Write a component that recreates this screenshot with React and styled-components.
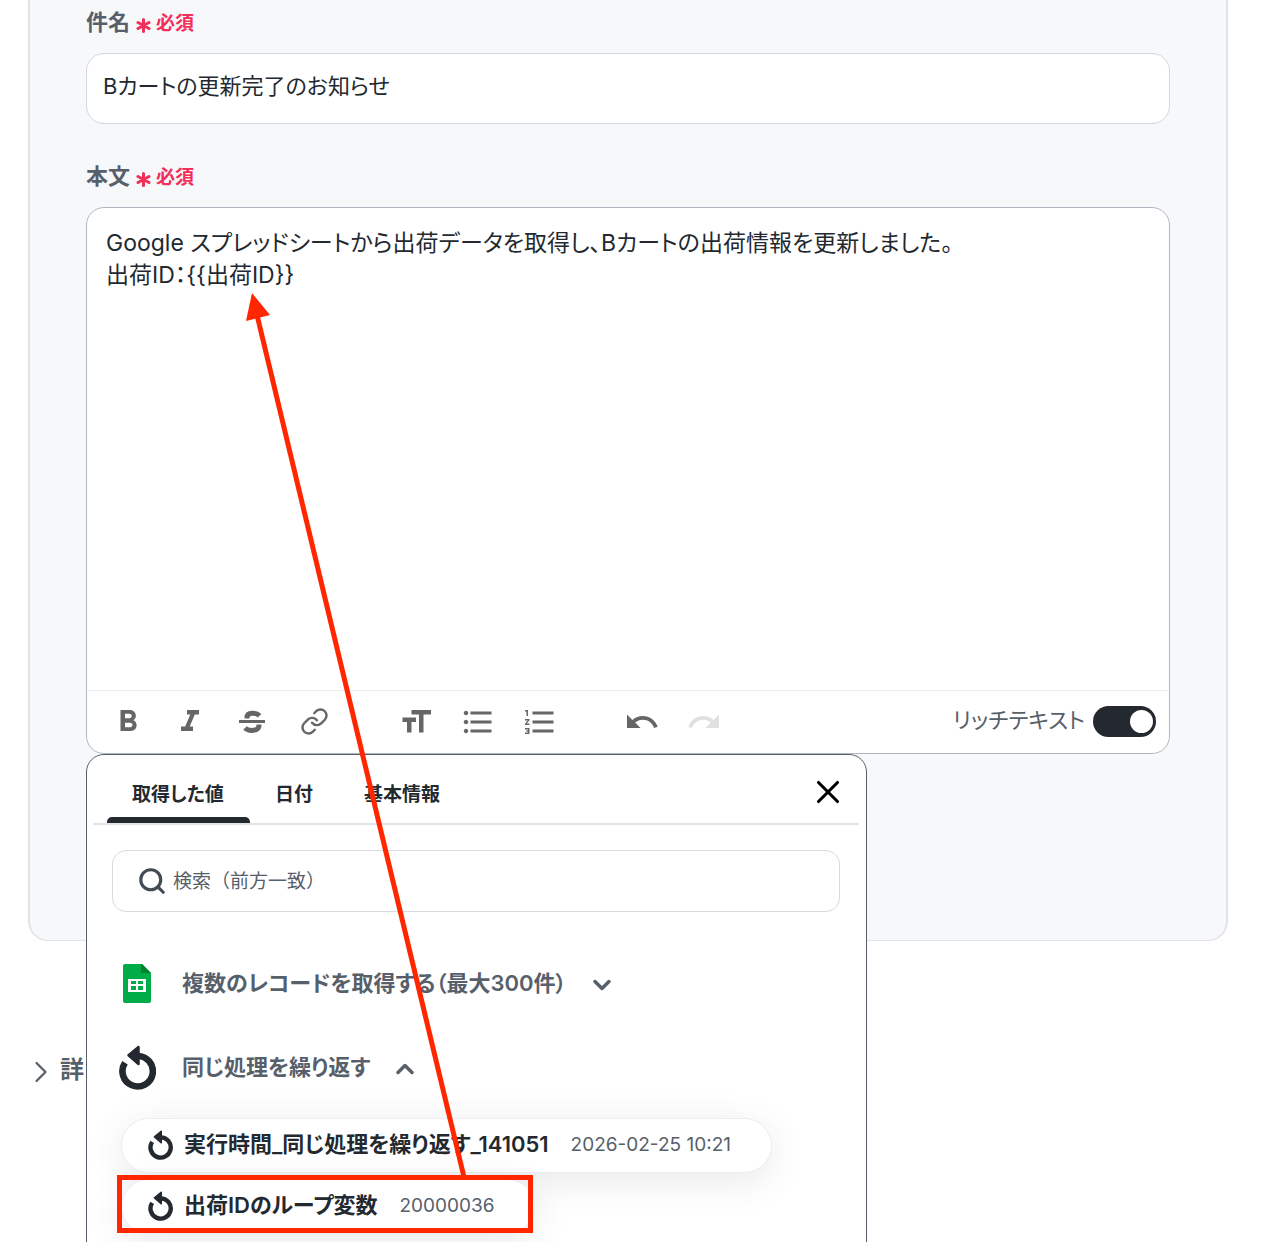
import React, { useState } from "react";
import styled, { createGlobalStyle } from "styled-components";
import {
  MdFormatBold,
  MdFormatItalic,
  MdFormatSize,
  MdFormatListBulleted,
  MdFormatListNumbered,
  MdUndo,
  MdRedo,
} from "react-icons/md";
import { Link, Search, X, ChevronDown, ChevronUp, ChevronRight } from "lucide-react";

const GlobalStyle = createGlobalStyle`
  * {
    box-sizing: border-box;
  }

  body {
    margin: 0;
    background: #fff;
    color: #23292f;
    font-family: Inter, "Noto Sans CJK JP", sans-serif;
    font-feature-settings: "palt";
  }

  button, input, textarea {
    font: inherit;
    font-feature-settings: inherit;
    color: inherit;
  }
`;

const Page = styled.main`
  position: relative;
  height: 100vh;
  overflow: hidden;
`;

const Card = styled.section`
  margin: 0 42px 0 28px;
  padding: 0 56px 186px;
  background: #f7f8fa;
  border: 2px solid #e0e4e9;
  border-top: 0;
  border-bottom-width: 1px;
  border-radius: 0 0 20px 20px;
`;

const Field = styled.div`
  position: relative;
  padding-top: ${(props) => props.$top}px;
`;

const Label = styled.label`
  display: flex;
  align-items: center;
  height: 32px;
  padding-bottom: 6px;
  font-size: 22px;
  font-weight: 600;
  color: #57606a;
`;

const Required = styled.span`
  display: flex;
  align-items: center;
  gap: 5px;
  margin-left: 6px;
  padding-top: 2px;
  font-size: 19px;
  color: #f12f5b;
`;

const SubjectInput = styled.input`
  display: block;
  width: 100%;
  height: 71px;
  margin-top: 14px;
  padding: 0 16px 10px;
  font-size: 22px;
  background: #fff;
  border: 1px solid #d0d7de;
  border-radius: 18px;
`;

const Editor = styled.div`
  margin-top: 14px;
  background: #fff;
  border: 1px solid #afb8c1;
  border-radius: 18px;
  overflow: hidden;
`;

const BodyInput = styled.textarea`
  display: block;
  width: 100%;
  height: 482px;
  padding: 19px;
  font-size: 23px;
  line-height: 32px;
  background: transparent;
  border: 0;
  outline: 0;
  resize: none;
`;

const Toolbar = styled.div`
  display: flex;
  align-items: center;
  gap: 66px;
  height: 63px;
  padding: 0 13px 1px 23px;
  border-top: 1px solid #ebecee;
`;

const ToolGroup = styled.div`
  display: flex;
  gap: 26px;
`;

const ToolButton = styled.button`
  display: flex;
  align-items: center;
  justify-content: center;
  width: 36px;
  height: 36px;
  padding: 0;
  color: #666;
  background: none;
  border: 0;

  &:disabled {
    color: #e0e0e0;
  }
`;

const SwitchLabel = styled.label`
  display: flex;
  align-items: center;
  gap: 8px;
  margin-left: auto;
  font-size: 22px;
  color: #57606a;
`;

const SwitchText = styled.span`
  padding-bottom: 8px;
`;

const Switch = styled.input`
  appearance: none;
  display: flex;
  justify-content: flex-end;
  align-items: center;
  width: 63px;
  height: 31px;
  margin: 0;
  padding: 3px;
  background: #23292f;
  border-radius: 16px;

  &::before {
    content: "";
    width: 23px;
    height: 23px;
    background: #fff;
    border-radius: 50%;
  }

  &:not(:checked) {
    justify-content: flex-start;
    background: #afb8c1;
  }
`;

const Popup = styled.div`
  position: absolute;
  top: 100%;
  left: 0;
  width: 781px;
  height: 600px;
  padding: 0 7px 0 6px;
  background: #fff;
  border: 1px solid #57606a;
  border-radius: 18px;
`;

const Tabs = styled.div`
  display: flex;
  align-items: flex-end;
  height: 70px;
  padding: 6px 12px 0 14px;
  border-bottom: 2px solid #e0e3e8;
`;

const Tab = styled.button`
  display: flex;
  flex-direction: column;
  justify-content: flex-end;
  gap: 11px;
  padding: 0;
  font-size: 19px;
  font-weight: 600;
  background: none;
  border: 0;

  &::after {
    content: "";
    width: 100%;
    height: 6px;
    background: ${(props) => (props.$active ? "#23292f" : "transparent")};
    border-radius: 5px 5px 0 0;
  }
`;

const TabText = styled.span`
  padding: 0 26px 0 25px;
`;

const CloseButton = styled.button`
  display: flex;
  align-self: center;
  margin-left: auto;
  padding: 0;
  color: #000;
  background: none;
  border: 0;
`;

const SearchBox = styled.label`
  display: flex;
  align-items: center;
  gap: 6px;
  height: 62px;
  margin: 25px 19px 0;
  padding: 0 24px;
  color: #424a53;
  border: 1px solid #d5dbe1;
  border-radius: 14px;
`;

const SearchInput = styled.input`
  flex: 1;
  padding: 0;
  font-size: 19px;
  font-feature-settings: normal;
  background: none;
  border: 0;
  outline: 0;

  &::placeholder {
    color: #57606a;
  }
`;

const Source = styled.button`
  display: flex;
  align-items: center;
  height: 44px;
  margin: ${(props) => props.$top}px 0 0 22px;
  padding: 0;
  font-size: 22px;
  font-weight: 600;
  color: #57606a;
  background: none;
  border: 0;
`;

const SourceIcon = styled.span`
  display: flex;
  justify-content: center;
  width: 44px;
  margin-right: 23px;
`;

const SourceName = styled.span`
  margin-right: 21px;
  padding-bottom: 4px;
`;

const SourceChevron = styled.span`
  display: flex;
  padding-top: 4px;
`;

const ValueList = styled.div`
  display: flex;
  flex-direction: column;
  align-items: flex-start;
  gap: 6px;
  margin: 29px 0 0 28px;
`;

const Value = styled.button`
  display: flex;
  align-items: center;
  height: 55px;
  padding: 0 40px 2px 26px;
  background: #fff;
  border: 1px solid #eaeef2;
  border-radius: 28px;
  box-shadow: 0 8px 36px rgba(66, 74, 83, 0.12);
`;

const ValueName = styled.span`
  margin: 0 22px 0 11px;
  padding-bottom: 6px;
  font-size: 22px;
  font-weight: 600;
`;

const ValueSample = styled.span`
  font-size: 19px;
  color: #57606a;
`;

const Details = styled.button`
  display: flex;
  align-items: center;
  gap: 1px;
  margin: 109px 0 0 23px;
  padding: 0;
  font-size: 24px;
  font-weight: 600;
  color: #57606a;
  background: none;
  border: 0;
`;

const DetailsText = styled.span`
  padding-bottom: 8px;
`;

const Annotation = styled.svg`
  position: absolute;
  top: 0;
  left: 0;
  pointer-events: none;
`;

const SheetsIcon = () => (
  <svg width="28" height="39" viewBox="0 0 28 39">
    <path d="M2 0h17l9 9v28a2 2 0 0 1-2 2H2a2 2 0 0 1-2-2V2a2 2 0 0 1 2-2z" fill="#00ac47" />
    <path d="M18 0h1l9 9h-10z" fill="#00832d" />
    <path
      d="M5 15h18v13H5zM8 17v3h5v-3zM15 17v3h5v-3zM8 22v4h5v-4zM15 22v4h5v-4z"
      fill="#fff"
      fillRule="evenodd"
    />
  </svg>
);

const LoopIcon = ({ size }) => (
  <svg width={size} height={Math.round((size * 45) / 37)} viewBox="0 0 37 45">
    <path
      d="M6 17.800A15.200 15.200 0 1 0 18.500 11"
      fill="none"
      stroke="#23292f"
      strokeWidth="6.600"
    />
    <path
      d="M9.500 10.200L19.500 2V19z"
      fill="#23292f"
      stroke="#23292f"
      strokeWidth="2.500"
      strokeLinejoin="round"
    />
  </svg>
);

const StrikeIcon = () => (
  <svg width="36" height="36" viewBox="0 0 36 36" fill="none" stroke="currentColor">
    <path d="M5 17.500h26" strokeWidth="3" />
    <path d="M25.500 11.800C22.500 8.500 13 8 13 13.500V14.500" strokeWidth="5" />
    <path d="M11 24C14.500 27.500 25 27.500 25 21.500V20.500" strokeWidth="5" />
  </svg>
);

const StarIcon = () => (
  <svg width="15" height="25" viewBox="0 0 15 25" stroke="currentColor" strokeWidth="3" strokeLinecap="round">
    <path d="M7.500 10.500v12M2 13.500l11 6M13 13.500l-11 6" />
  </svg>
);

const RequiredMark = () => (
  <Required>
    <StarIcon />
    必須
  </Required>
);

const tabs = ["取得した値", "日付", "基本情報"];

const values = [
  { name: "実行時間_同じ処理を繰り返す_141051", sample: "2026-02-25 10:21" },
  { name: "出荷IDのループ変数", sample: "20000036" },
];

const App = () => {
  const [subject, setSubject] = useState("Bカートの更新完了のお知らせ");
  const [body, setBody] = useState(
    "Google スプレッドシートから出荷データを取得し、Bカートの出荷情報を更新しました。\n出荷ID：{{出荷ID}}"
  );
  const [rich, setRich] = useState(true);
  const [activeTab, setActiveTab] = useState(tabs[0]);

  return (
    <Page>
      <GlobalStyle />
      <Card>
        <Field $top={7}>
          <Label htmlFor="subject">
            件名
            <RequiredMark />
          </Label>
          <SubjectInput id="subject" value={subject} onChange={(e) => setSubject(e.target.value)} />
        </Field>
        <Field $top={37}>
          <Label htmlFor="body">
            本文
            <RequiredMark />
          </Label>
          <Editor>
            <BodyInput id="body" value={body} onChange={(e) => setBody(e.target.value)} />
            <Toolbar>
              <ToolGroup>
                <ToolButton aria-label="bold"><MdFormatBold size={36} /></ToolButton>
                <ToolButton aria-label="italic"><MdFormatItalic size={36} /></ToolButton>
                <ToolButton aria-label="strike"><StrikeIcon /></ToolButton>
                <ToolButton aria-label="link"><Link size={29} /></ToolButton>
              </ToolGroup>
              <ToolGroup>
                <ToolButton aria-label="size"><MdFormatSize size={36} /></ToolButton>
                <ToolButton aria-label="bullets"><MdFormatListBulleted size={38} /></ToolButton>
                <ToolButton aria-label="numbers"><MdFormatListNumbered size={36} /></ToolButton>
              </ToolGroup>
              <ToolGroup>
                <ToolButton aria-label="undo"><MdUndo size={36} /></ToolButton>
                <ToolButton aria-label="redo" disabled><MdRedo size={36} /></ToolButton>
              </ToolGroup>
              <SwitchLabel>
                <SwitchText>リッチテキスト</SwitchText>
                <Switch type="checkbox" checked={rich} onChange={() => setRich(!rich)} />
              </SwitchLabel>
            </Toolbar>
          </Editor>
          <Popup>
            <Tabs>
              {tabs.map((tab) => (
                <Tab key={tab} $active={tab === activeTab} onClick={() => setActiveTab(tab)}>
                  <TabText>{tab}</TabText>
                </Tab>
              ))}
              <CloseButton aria-label="close"><X size={38} strokeWidth={2} /></CloseButton>
            </Tabs>
            <SearchBox>
              <Search size={30} strokeWidth={2.5} />
              <SearchInput aria-label="検索" placeholder="検索（前方一致）" />
            </SearchBox>
            <Source $top={49}>
              <SourceIcon><SheetsIcon /></SourceIcon>
              <SourceName>複数のレコードを取得する（最大300件）</SourceName>
              <SourceChevron><ChevronDown size={28} strokeWidth={3} /></SourceChevron>
            </Source>
            <Source $top={40}>
              <SourceIcon><LoopIcon size={37} /></SourceIcon>
              <SourceName>同じ処理を繰り返す</SourceName>
              <SourceChevron><ChevronUp size={28} strokeWidth={3} /></SourceChevron>
            </Source>
            <ValueList>
              {values.map((value) => (
                <Value key={value.name}>
                  <LoopIcon size={25} />
                  <ValueName>{value.name}</ValueName>
                  <ValueSample>{value.sample}</ValueSample>
                </Value>
              ))}
            </ValueList>
          </Popup>
        </Field>
      </Card>
      <Details>
        <ChevronRight size={36} strokeWidth={1.5} />
        <DetailsText>詳</DetailsText>
      </Details>
      <Annotation width="560" height="1242">
        <rect x="119.500" y="1177.500" width="411" height="53" fill="none" stroke="#ff2600" strokeWidth="5" />
        <path d="M464 1177L257 315" stroke="#ff2600" strokeWidth="5" />
        <path d="M252 293L270 315L246 321z" fill="#ff2600" />
      </Annotation>
    </Page>
  );
};

export default App;
